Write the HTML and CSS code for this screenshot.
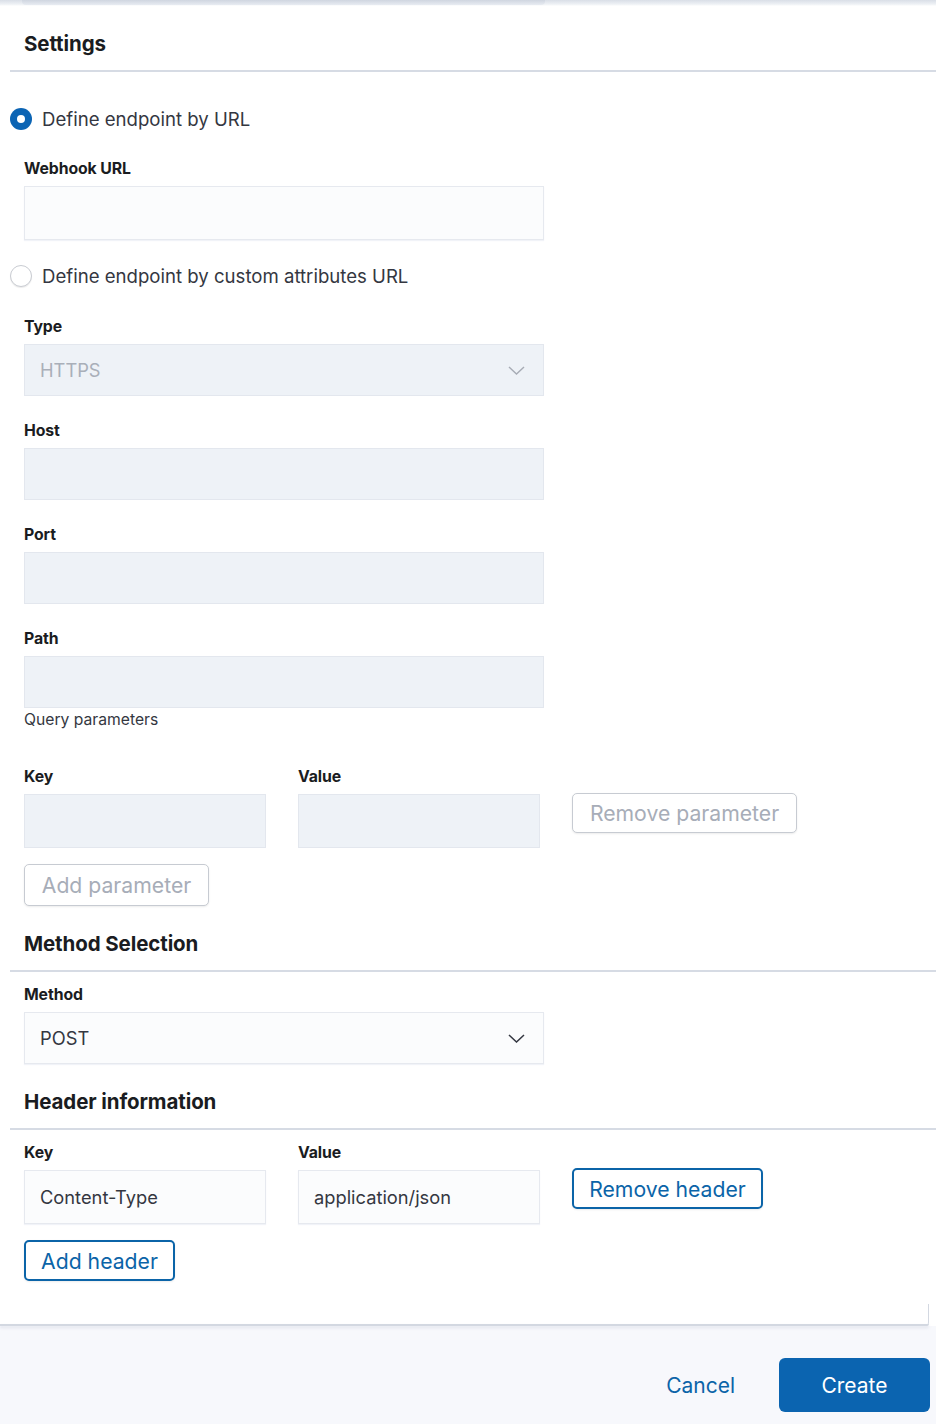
FILE: index.html
```html
<!DOCTYPE html>
<html>
<head>
<meta charset="utf-8">
<link rel="stylesheet" href="styles.css">
</head>
<body>
<div class="topstrip"><div class="topstrip-inner"></div></div>
<main class="panel">
  <h2 class="section-title first">Settings</h2>
  <div class="rule"></div>

  <label class="radio-row r1"><span class="radio checked"></span><span class="radio-text">Define endpoint by URL</span></label>
  <div class="field f-webhook">
    <div class="label">Webhook URL</div>
    <div class="input tall"></div>
  </div>

  <label class="radio-row r2"><span class="radio"></span><span class="radio-text">Define endpoint by custom attributes URL</span></label>

  <div class="field f-type">
    <div class="label">Type</div>
    <div class="input select disabled"><span class="sel-text">HTTPS</span>
      <svg class="chev" width="17" height="9" viewBox="0 0 17 9"><polyline points="1,1 8.5,8 16,1" fill="none" stroke="#a7acb5" stroke-width="1.4"/></svg>
    </div>
  </div>
  <div class="field f-gap">
    <div class="label">Host</div>
    <div class="input disabled"></div>
  </div>
  <div class="field f-gap">
    <div class="label">Port</div>
    <div class="input disabled"></div>
  </div>
  <div class="field f-gap">
    <div class="label">Path</div>
    <div class="input disabled"></div>
  </div>
  <div class="help">Query parameters</div>

  <div class="kv-row params">
    <div class="kv-field">
      <div class="label">Key</div>
      <div class="input small tall disabled"></div>
    </div>
    <div class="kv-field">
      <div class="label">Value</div>
      <div class="input small tall disabled"></div>
    </div>
    <button class="btn ghost remove-param">Remove parameter</button>
  </div>
  <button class="btn ghost add-param">Add parameter</button>

  <h2 class="section-title">Method Selection</h2>
  <div class="rule"></div>
  <div class="field f-method">
    <div class="label">Method</div>
    <div class="input select"><span class="sel-text dark">POST</span>
      <svg class="chev" width="17" height="9" viewBox="0 0 17 9"><polyline points="1,1 8.5,8 16,1" fill="none" stroke="#343741" stroke-width="1.5"/></svg>
    </div>
  </div>

  <h2 class="section-title">Header information</h2>
  <div class="rule"></div>
  <div class="kv-row headers">
    <div class="kv-field">
      <div class="label">Key</div>
      <div class="input small tall"><span class="val">Content-Type</span></div>
    </div>
    <div class="kv-field">
      <div class="label">Value</div>
      <div class="input small tall"><span class="val">application/json</span></div>
    </div>
    <button class="btn primary-outline remove-header">Remove header</button>
  </div>
  <button class="btn primary-outline add-header">Add header</button>

  <div class="card-end"></div>
</main>
<footer class="footer">
  <button class="cancel">Cancel</button>
  <button class="create">Create</button>
</footer>
</body>
</html>
```

FILE: styles.css
```css
* { box-sizing: border-box; }
html, body { margin: 0; padding: 0; }
body {
  width: 936px;
  height: 1424px;
  overflow: hidden;
  font-family: Inter, "Noto Sans", sans-serif;
  color: #343741;
  background: #fff;
}
.topstrip {
  height: 6px;
  background: linear-gradient(#d9dee7, #eef1f5 70%, #fff);
  padding: 0 391px 0 22px;
}
.topstrip-inner {
  height: 5px;
  border-radius: 0 0 4px 4px;
  background: linear-gradient(#cfd5e0, #e8ecf2);
}
.panel {
  padding: 24px 0 0 10px;
  position: relative;
  height: 1320px;
}
.section-title {
  margin: 24px 0 12px 14px;
  font-size: 20.5px;
  line-height: 28px;
  font-weight: 700;
  color: #1a1c21;
  letter-spacing: -0.1px;
}
.section-title.first { margin-top: 0; }
.rule {
  height: 2px;
  background: #d6dbe4;
}
.radio-row {
  display: flex;
  align-items: center;
  height: 24px;
  gap: 10px;
}
.r1 { margin-top: 35px; }
.r2 { margin-top: 24px; }
.radio {
  width: 22px;
  height: 22px;
  border-radius: 50%;
  border: 1.5px solid #c9ccd2;
  background: #fff;
  box-shadow: 0 1px 1px rgba(0,0,0,0.08);
  position: relative;
}
.radio.checked {
  border: none;
  background: #0b64b4;
  box-shadow: none;
}
.radio.checked::after {
  content: "";
  position: absolute;
  left: 7px;
  top: 7px;
  width: 8px;
  height: 8px;
  border-radius: 50%;
  background: #fff;
}
.radio-text {
  font-size: 18.6px;
  color: #343741;
}
.field { padding-left: 14px; }
.f-webhook { margin-top: 27px; }
.f-type { margin-top: 28px; }
.f-gap { margin-top: 24px; }
.f-method { margin-top: 12px; }
.label {
  font-size: 15.8px;
  line-height: 20px;
  padding-top: 1px;
  height: 20px;
  font-weight: 700;
  color: #1a1c21;
  margin-bottom: 8px;
  letter-spacing: -0.1px;
}
.input {
  width: 520px;
  height: 52px;
  background: #fbfcfd;
  border: 1px solid #e6e9ef;
  box-shadow: 0 1px 1px rgba(17,43,134,0.06);
  display: flex;
  align-items: center;
  padding: 0 15px;
  font-size: 18px;
}
.input.tall { height: 54px; }
.input.disabled {
  background: #eef2f7;
  border-color: #e3e7ee;
  box-shadow: none;
}
.input.small { width: 242px; }
.select { justify-content: space-between; padding-right: 18px; }
.sel-text { color: #a9afb9; font-size: 18.3px; }
.sel-text.dark { color: #343741; }
.val { color: #343741; font-size: 18.3px; }
.help {
  padding-left: 14px;
  margin-top: 2px;
  font-size: 15.7px;
  line-height: 20px;
  color: #343741;
}
.kv-row {
  display: flex;
  align-items: flex-start;
  gap: 32px;
  padding-left: 14px;
}
.kv-row.params { margin-top: 36px; }
.kv-row.headers { margin-top: 12px; }
.btn {
  font-family: Inter, "Noto Sans", sans-serif;
  font-size: 21.2px;
  border-radius: 5px;
  background: #fff;
  padding: 0;
  cursor: pointer;
  display: block;
}
.btn.ghost {
  border: 1.5px solid #c7cbd2;
  color: #a7adb8;
  box-shadow: 0 1px 2px rgba(0,0,0,0.08);
}
.btn.primary-outline {
  border: 2px solid #0b64a8;
  color: #0b64a8;
  box-shadow: 0 1px 2px rgba(0,0,0,0.08);
}
.remove-param { margin-top: 27px; height: 40px; width: 225px; }
.add-param { margin: 16px 0 0 14px; height: 42px; width: 185px; }
.remove-header { margin-top: 26px; height: 41px; width: 191px; }
.add-header { margin: 16px 0 0 14px; height: 41px; width: 151px; }
.card-end {
  position: absolute;
  right: 7px;
  bottom: 0;
  width: 40px;
  height: 22px;
  border-right: 1.5px solid #d3d8e1;
  border-bottom-right-radius: 4px;
}
.panel::after {
  content: "";
  position: absolute;
  left: 0;
  right: 7px;
  bottom: 0;
  height: 2px;
  background: #d3d8e1;
  border-bottom-right-radius: 4px;
  box-shadow: 0 2px 3px rgba(150,160,185,0.25);
}
.footer {
  height: 104px;
  background: #f7f8fc;
  display: flex;
  align-items: flex-start;
  justify-content: flex-end;
  padding: 32px 6px 0 0;
  gap: 32px;
}
.cancel {
  border: none;
  background: none;
  font-family: Inter, "Noto Sans", sans-serif;
  font-size: 21px;
  color: #0b64a8;
  padding: 0 12px;
  height: 54px;
}
.create {
  width: 151px;
  height: 54px;
  border: none;
  border-radius: 6px;
  background: #0b64b0;
  color: #fff;
  font-family: Inter, "Noto Sans", sans-serif;
  font-size: 21px;
}
```
